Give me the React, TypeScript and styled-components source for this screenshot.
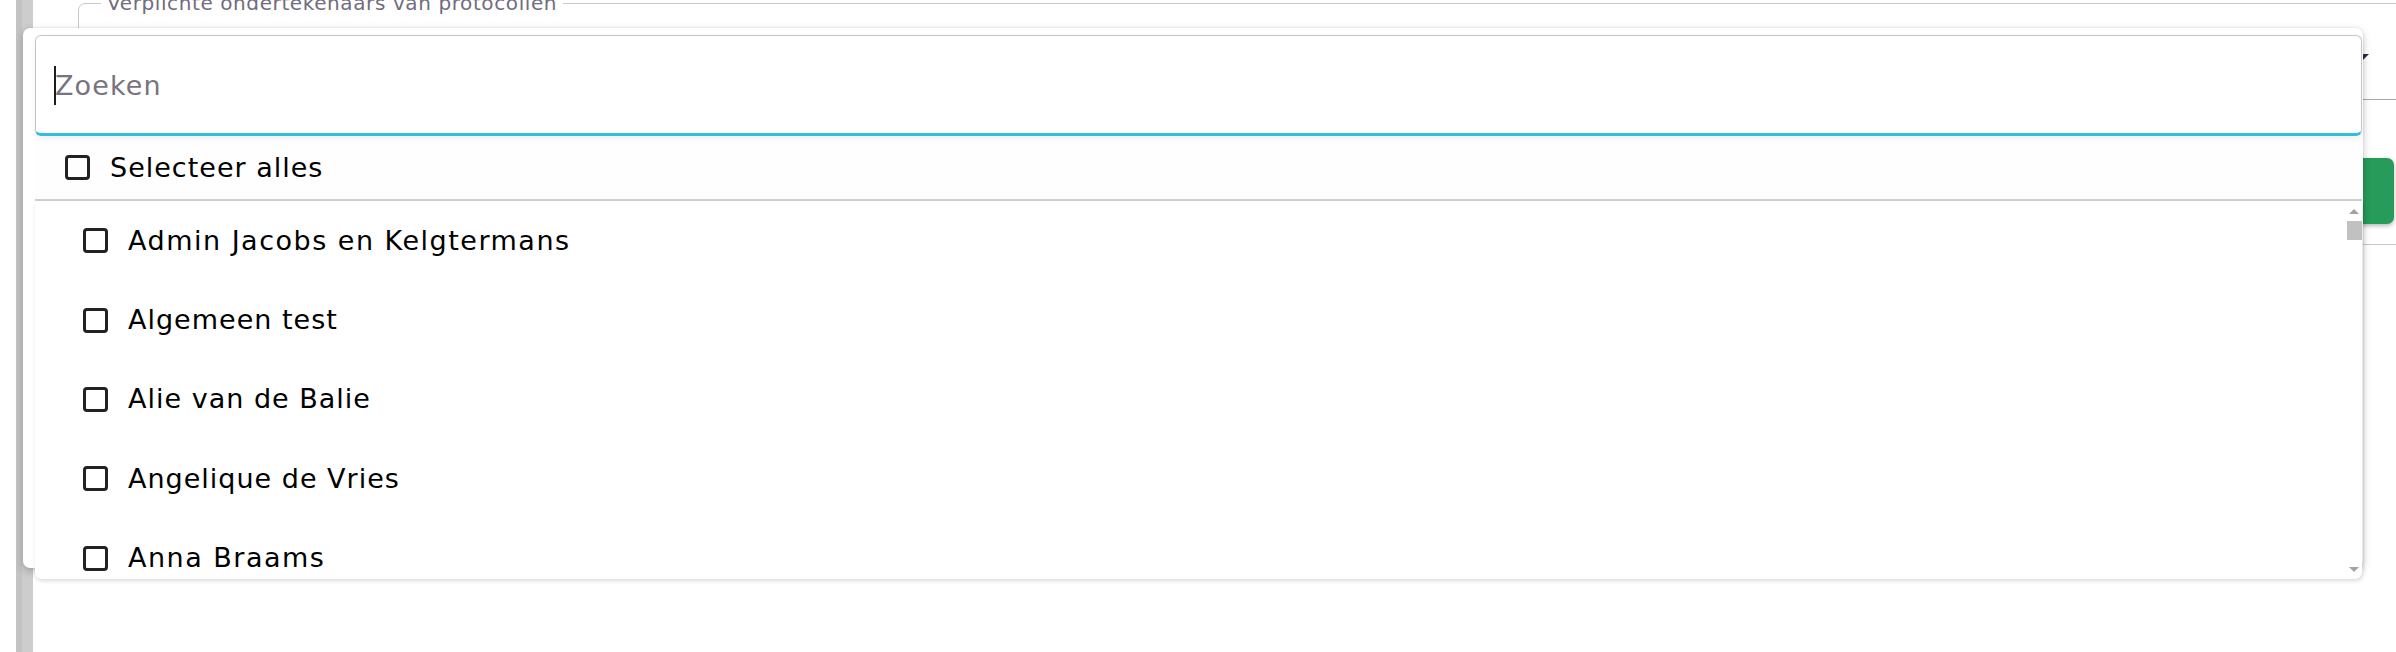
import React from "react";
import styled, { createGlobalStyle } from "styled-components";

const GlobalStyle = createGlobalStyle`
  html, body {
    margin: 0;
    padding: 0;
    background: #ffffff;
    overflow: hidden;
  }
  body {
    font-family: "DejaVu Sans", "Noto Sans", sans-serif;
    width: 2396px;
    height: 652px;
  }
  #root { height: 100%; }
`;

const Page = styled.div`
  position: relative;
  display: flex;
  height: 652px;
  width: 2396px;
  overflow: hidden;
`;

const Gutter = styled.div`
  width: 16px;
  flex: none;
  background: #ffffff;
`;

const EdgeStrip = styled.div`
  width: 17px;
  flex: none;
  display: flex;
`;

const StripDark = styled.div`
  width: 6px;
  background: #c3c3c3;
`;

const StripLight = styled.div`
  flex: 1;
  background: #cdcdcd;
`;

const Main = styled.div`
  flex: 1;
  min-width: 0;
  display: flex;
  flex-direction: column;
`;

const Fieldset = styled.fieldset`
  margin: -9px 0 0 45px;
  padding: 0 0 20px 0;
  width: 2342px;
  box-sizing: border-box;
  flex: none;
  border: 1px solid #c9c9c9;
  border-radius: 7px;
  display: flex;
  flex-direction: column;
`;

const Legend = styled.legend`
  margin-left: 22px;
  padding: 0 6px;
  font-size: 20px;
  line-height: 24px;
  letter-spacing: 0.6px;
  color: #716c7e;
`;

const SelectField = styled.div`
  height: 84px;
  margin: 0 14px 0 20px;
  border-bottom: 1px solid #a9a9a9;
  display: flex;
  align-items: center;
  justify-content: flex-end;
  padding-right: 36px;
`;

const Caret = styled.span`
  width: 0;
  height: 0;
  border-left: 6px solid transparent;
  border-right: 6px solid transparent;
  border-top: 6px solid #2a3140;
`;

const ActionRow = styled.div`
  display: flex;
  justify-content: flex-end;
  padding-right: 25px;
  margin-top: 58px;
`;

const SaveButton = styled.button`
  width: 220px;
  height: 66px;
  border: none;
  border-radius: 7px;
  background: #279b5a;
  color: #ffffff;
  font-family: "DejaVu Sans", sans-serif;
  font-size: 22px;
  box-shadow: 0 2px 4px rgba(0, 0, 0, 0.28);
`;

const Dropdown = styled.div`
  position: absolute;
  left: 23px;
  top: 28px;
  width: 2340px;
  height: 540px;
  box-sizing: border-box;
  padding: 7px 1px 0 12px;
  background: #ffffff;
  border-radius: 7px;
  box-shadow: 0 3px 8px rgba(0, 0, 0, 0.22), 0 0 2px rgba(0, 0, 0, 0.12);
  display: flex;
  flex-direction: column;
`;

const SearchBox = styled.div`
  position: relative;
  height: 101px;
  box-sizing: border-box;
  border: 1px solid #c5c5c5;
  border-bottom: 3px solid #2fbde2;
  border-radius: 6px;
  display: flex;
  align-items: center;
  box-shadow: 0 3px 6px rgba(0, 0, 0, 0.06);
  flex: none;
`;

const SearchInput = styled.input`
  flex: 1;
  height: 100%;
  border: none;
  outline: none;
  background: transparent;
  padding: 2px 0 0 19px;
  font-family: "DejaVu Sans", sans-serif;
  font-size: 27px;
  letter-spacing: 1.1px;
  color: #222;
  caret-color: transparent;
  &::placeholder {
    color: #77737f;
  }
`;

const FakeCaret = styled.span`
  position: absolute;
  left: 18px;
  top: 30px;
  width: 2px;
  height: 39px;
  background: #1d1d1d;
`;

const SelectAllRow = styled.label`
  height: 63px;
  flex: none;
  display: flex;
  align-items: center;
  padding-left: 30px;
  background: #fefefe;
  border-bottom: 2px solid #d0d0d0;
`;

const Box = styled.span`
  width: 25px;
  height: 25px;
  box-sizing: border-box;
  border: 3px solid #222222;
  border-radius: 4px;
  flex: none;
`;

const ItemText = styled.span<{ $wide?: boolean }>`
  margin-left: 20px;
  font-size: 27px;
  line-height: 34px;
  letter-spacing: ${(p) => (p.$wide ? "1.5px" : "1px")};
  color: #000000;
  white-space: nowrap;
`;

const ListPanel = styled.div`
  height: 378px;
  flex: none;
  display: flex;
  background: #ffffff;
  border-radius: 0 0 7px 7px;
  box-shadow: 1px 2px 4px rgba(0, 0, 0, 0.14);
  overflow: hidden;
`;

const Options = styled.div`
  flex: 1;
  min-width: 0;
  display: flex;
  flex-direction: column;
  overflow: hidden;
`;

const OptionRow = styled.label`
  height: 79.4px;
  flex: none;
  display: flex;
  align-items: center;
  padding-left: 48px;
`;

const ScrollRail = styled.div`
  width: 16px;
  flex: none;
  display: flex;
  flex-direction: column;
  align-items: center;
  padding: 8px 0 7px;
  box-sizing: border-box;
`;

const ArrowUp = styled.span`
  width: 0;
  height: 0;
  border-left: 5px solid transparent;
  border-right: 5px solid transparent;
  border-bottom: 5px solid #a3a3a3;
`;

const ArrowDown = styled.span`
  width: 0;
  height: 0;
  margin-top: auto;
  border-left: 5px solid transparent;
  border-right: 5px solid transparent;
  border-top: 5px solid #a3a3a3;
`;

const Thumb = styled.span`
  margin-top: 7px;
  width: 15px;
  height: 19px;
  background: #c1c1c1;
`;

const people = [
  { name: "Admin Jacobs en Kelgtermans", wide: true },
  { name: "Algemeen test", wide: false },
  { name: "Alie van de Balie", wide: false },
  { name: "Angelique de Vries", wide: false },
  { name: "Anna Braams", wide: true },
];

export default function App() {
  return (
    <>
      <GlobalStyle />
      <Page>
        <Gutter />
        <EdgeStrip>
          <StripDark />
          <StripLight />
        </EdgeStrip>
        <Main>
          <Fieldset>
            <Legend>Verplichte ondertekenaars van protocollen</Legend>
            <SelectField>
              <Caret />
            </SelectField>
            <ActionRow>
              <SaveButton>Opslaan</SaveButton>
            </ActionRow>
          </Fieldset>
        </Main>
        <Dropdown>
          <SearchBox>
            <FakeCaret />
            <SearchInput placeholder="Zoeken" />
          </SearchBox>
          <SelectAllRow>
            <Box />
            <ItemText>Selecteer alles</ItemText>
          </SelectAllRow>
          <ListPanel>
            <Options>
              {people.map((p) => (
                <OptionRow key={p.name}>
                  <Box />
                  <ItemText $wide={p.wide}>{p.name}</ItemText>
                </OptionRow>
              ))}
            </Options>
            <ScrollRail>
              <ArrowUp />
              <Thumb />
              <ArrowDown />
            </ScrollRail>
          </ListPanel>
        </Dropdown>
      </Page>
    </>
  );
}
